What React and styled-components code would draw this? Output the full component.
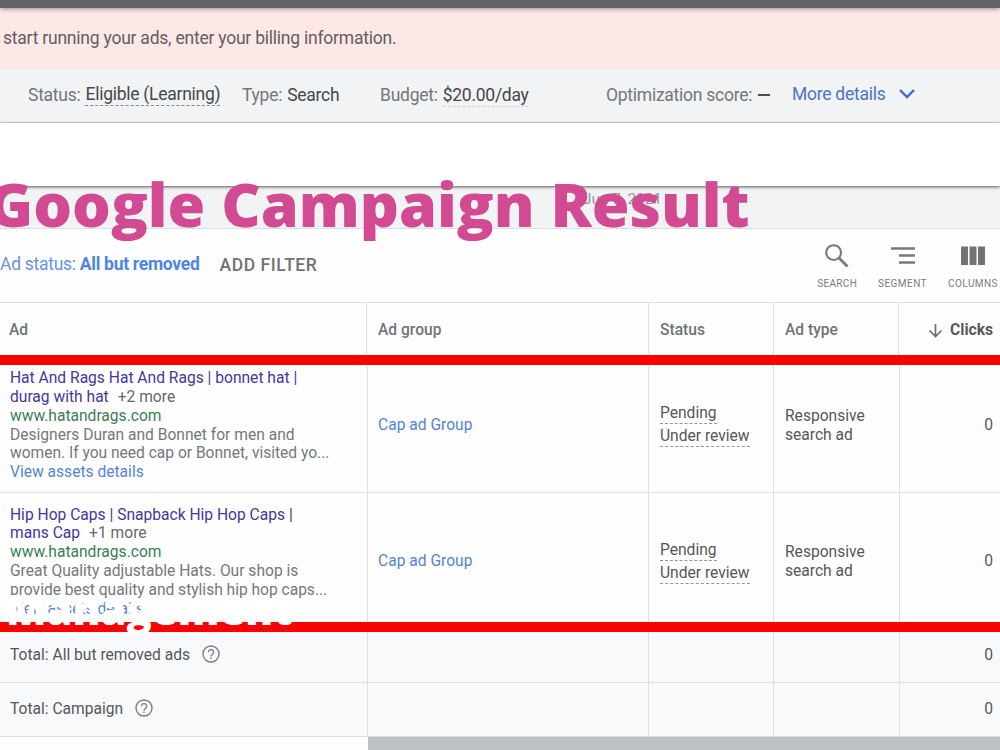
import React from "react";
import styled, { createGlobalStyle } from "styled-components";

const GlobalStyle = createGlobalStyle`
  * { box-sizing: border-box; }
  body {
    margin: 0;
    overflow: hidden;
    font-family: Roboto, "Liberation Sans", sans-serif;
    background: #fefefe;
  }
`;

const Page = styled.div`
  position: relative;
  width: 1000px;
  height: 750px;
  overflow: hidden;
  display: flex;
  flex-direction: column;
`;

const TopBar = styled.div`
  height: 8px;
  flex: none;
  background: #5f6368;
  box-shadow: 0 1px 5px rgba(60, 50, 50, 0.5);
  z-index: 1;
`;

const Banner = styled.div`
  height: 62px;
  flex: none;
  padding: 0 3px 3px;
  display: flex;
  align-items: center;
  background: #fce8e6;
  color: #655d60;
  font-size: 17.5px;
  letter-spacing: -0.23px;
`;

const StatusBar = styled.div`
  height: 53px;
  flex: none;
  display: flex;
  align-items: center;
  padding: 0 0 2px 28px;
  background: #f1f3f4;
  border-bottom: 1px solid #dadce0;
  font-size: 17.5px;
  letter-spacing: -0.26px;
  line-height: 22px;
  white-space: nowrap;
`;

const StatusItem = styled.div`
  display: flex;
  gap: 5px;
  width: ${(p) => p.$width}px;
  color: #74777b;
`;

const StatusValue = styled.span`
  height: 23px;
  color: #45484c;
  margin-top: ${(p) => (p.$raised ? "-1px" : "0")};
  border-bottom: ${(p) => (p.$line ? `1px dashed ${p.$line}` : "none")};
`;

const MoreDetails = styled.div`
  display: flex;
  align-items: center;
  gap: 14px;
  color: #4f74c6;
  padding-bottom: 3px;
`;

const Blank = styled.div`
  height: 63px;
  flex: none;
  background: #fff;
  box-shadow: 0 1px 3px rgba(0, 0, 0, 0.65);
  z-index: 1;
`;

const DateStrip = styled.div`
  height: 43px;
  flex: none;
  padding: 4px 0 0 583px;
  background: #f1f3f4;
  border-bottom: 1px solid #dcdfe1;
  color: #94979b;
  font-size: 15.3px;
`;

const Toolbar = styled.div`
  height: 74px;
  flex: none;
  display: flex;
  align-items: center;
  justify-content: space-between;
  padding-right: 2px;
  border-bottom: 1px solid #dfe1e3;
`;

const Filters = styled.div`
  display: flex;
  align-items: center;
  gap: 20px;
  padding-bottom: 4px;
  font-size: 17.5px;
  letter-spacing: -0.28px;
  color: #6991e0;

  b {
    color: #4f84e2;
  }
`;

const AddFilter = styled.span`
  position: relative;
  top: 1px;
  font-weight: 500;
  letter-spacing: 0.55px;
  color: #707275;
`;

const Tools = styled.div`
  display: flex;
  gap: 21px;
  padding-top: 2px;
`;

const Tool = styled.div`
  display: flex;
  flex-direction: column;
  align-items: center;
  gap: 10px;
  color: #7a7c7f;
  font-size: 10px;
  line-height: 12px;
  letter-spacing: ${(p) => p.$spacing}px;
`;

const Table = styled.div`
  flex: none;
`;

const Row = styled.div`
  display: grid;
  grid-template-columns: 368px 281px 125px 126px 100px;
  height: ${(p) => p.$height}px;
  background: ${(p) => (p.$total ? "#f8f9fa" : "#fefefe")};
  border-bottom: 1px solid #dddfe1;
  font-size: 15.6px;
  line-height: 18.8px;
  color: #54575b;
`;

const HeadRow = styled(Row)`
  grid-template-columns: 367px 282px 125px 125px 101px;
  font-weight: 500;
  color: #707377;
  border-bottom-color: transparent;
`;

const Cell = styled.div`
  display: flex;
  flex-direction: ${(p) => (p.$column ? "column" : "row")};
  align-items: ${(p) => (p.$column ? "flex-start" : "center")};
  justify-content: ${(p) => (p.$column ? "center" : p.$end ? "flex-end" : "flex-start")};
  gap: ${(p) => p.$gap || 0}px;
  padding: ${(p) => p.$drop || 0}px 7px 0 ${(p) => p.$indent || 10}px;
  border-right: 1px solid #dddfe1;
  white-space: nowrap;

  &:last-child {
    border-right: none;
  }
`;

const AdTitle = styled.span`
  color: #43389f;
`;

const More = styled.span`
  margin-left: 9px;
  color: #65686c;
`;

const AdUrl = styled.span`
  color: #3a8055;
`;

const AdText = styled.span`
  color: #75787b;
  letter-spacing: ${(p) => (p.$cut ? "-0.02px" : "0")};
`;

const Link = styled.span`
  color: #5584d6;
`;

const Dashed = styled.span`
  height: 20px;
  border-bottom: 1px dashed #94979b;
`;

const SortLabel = styled.b`
  color: #56595c;
`;

const Help = styled.svg`
  margin-bottom: 3px;
`;

const ScrollThumb = styled.div`
  height: 13px;
  flex: none;
  margin-left: 368px;
  background: #bdc1c6;
`;

const RedLine = styled.div`
  position: absolute;
  left: 0;
  right: 0;
  top: ${(p) => p.$top}px;
  height: 10px;
  background: #fa0303;
`;

const Caption = styled.div`
  position: absolute;
  left: ${(p) => p.$left}px;
  top: ${(p) => p.$top}px;
  font-family: "Open Sans", sans-serif;
  font-weight: 800;
  font-size: ${(p) => p.$size}px;
  line-height: 1;
  white-space: nowrap;
  color: ${(p) => p.$color};
  z-index: 2;
`;

const ads = [
  {
    title: ["Hat And Rags Hat And Rags | bonnet hat |", "durag with hat"],
    more: "+2 more",
    text: ["Designers Duran and Bonnet for men and", "women. If you need cap or Bonnet, visited yo..."],
    height: 137,
    drop: 3,
  },
  {
    title: ["Hip Hop Caps | Snapback Hip Hop Caps |", "mans Cap"],
    more: "+1 more",
    text: ["Great Quality adjustable Hats. Our shop is", "provide best quality and stylish hip hop caps..."],
    height: 136,
    drop: 2,
  },
];

const totals = ["Total: All but removed ads", "Total: Campaign"];

const HelpIcon = () => (
  <Help width="18" height="18" viewBox="0 0 18 18" fill="none" stroke="#7b7e82" strokeWidth="1.4">
    <circle cx="9" cy="9" r="8" />
    <path d="M6.400 7.200a2.600 2.600 0 1 1 4.200 2c-1 .7-1.600 1.100-1.600 2.200" />
    <path d="M9 12.600v1.500" />
  </Help>
);

export default function App() {
  return (
    <Page>
      <GlobalStyle />
      <TopBar />
      <Banner>start running your ads, enter your billing information.</Banner>
      <StatusBar>
        <StatusItem $width={214}>
          Status: <StatusValue $raised $line="#85888b">Eligible (Learning)</StatusValue>
        </StatusItem>
        <StatusItem $width={138}>
          Type: <StatusValue>Search</StatusValue>
        </StatusItem>
        <StatusItem $width={226}>
          Budget: <StatusValue $line="#d3d3d8">$20.00/day</StatusValue>
        </StatusItem>
        <StatusItem $width={186}>
          Optimization score:
          <svg width="13" height="22">
            <path d="M1 11h12" stroke="#4a4d50" strokeWidth="2" />
          </svg>
        </StatusItem>
        <MoreDetails>
          More details
          <svg width="16" height="11" viewBox="0 0 16 11" fill="none">
            <path d="M1 2l7 7 7-7" stroke="#3c6ac8" strokeWidth="2.4" />
          </svg>
        </MoreDetails>
      </StatusBar>
      <Blank />
      <DateStrip>Jun 7, 2021</DateStrip>
      <Toolbar>
        <Filters>
          <span>
            Ad status: <b>All but removed</b>
          </span>
          <AddFilter>ADD FILTER</AddFilter>
        </Filters>
        <Tools>
          <Tool $spacing={0.3}>
            <svg width="24" height="24" fill="none" stroke="#77797c">
              <circle cx="8.6" cy="8.6" r="7.4" strokeWidth="2.1" />
              <path d="M14 14l8.5 8.5" strokeWidth="2.8" />
            </svg>
            SEARCH
          </Tool>
          <Tool $spacing={0.45}>
            <svg width="24" height="24" stroke="#77797c" strokeWidth="2.4">
              <path d="M0 4.500h24M8 11.500h16M8 18.500h16" />
            </svg>
            SEGMENT
          </Tool>
          <Tool $spacing={0.45}>
            <svg width="24" height="24" fill="#707376">
              <path d="M0 2.500h7v18.500H0zM8.500 2.500h7v18.500h-7zM17 2.500h7v18.500h-7z" />
            </svg>
            COLUMNS
          </Tool>
        </Tools>
      </Toolbar>

      <Table>
        <HeadRow $height={53}>
          <Cell $drop={2} $indent={9}>Ad</Cell>
          <Cell $drop={2} $indent={11}>Ad group</Cell>
          <Cell $drop={2} $indent={11}>Status</Cell>
          <Cell $drop={2} $indent={11}>Ad type</Cell>
          <Cell $drop={2} $end $gap={7}>
            <svg width="15" height="15" fill="none" stroke="#6b6e72" strokeWidth="1.7">
              <path d="M7.500 1v12.500M1.500 7.500l6 6 6-6" />
            </svg>
            <SortLabel>Clicks</SortLabel>
          </Cell>
        </HeadRow>
        {ads.map((ad) => (
          <Row key={ad.more} $height={ad.height}>
            <Cell $column $drop={3}>
              <AdTitle>{ad.title[0]}</AdTitle>
              <AdTitle>
                {ad.title[1]}
                <More>{ad.more}</More>
              </AdTitle>
              <AdUrl>www.hatandrags.com</AdUrl>
              <AdText>{ad.text[0]}</AdText>
              <AdText $cut>{ad.text[1]}</AdText>
              <Link>View assets details</Link>
            </Cell>
            <Cell $drop={ad.drop}>
              <Link>Cap ad Group</Link>
            </Cell>
            <Cell $column $gap={3} $drop={3} $indent={11}>
              <Dashed>Pending</Dashed>
              <Dashed>Under review</Dashed>
            </Cell>
            <Cell $column $drop={3} $indent={11}>
              <span>Responsive</span>
              <span>search ad</span>
            </Cell>
            <Cell $end $drop={ad.drop}>0</Cell>
          </Row>
        ))}
        {totals.map((label) => (
          <Row key={label} $height={54} $total>
            <Cell $gap={12}>
              {label}
              <HelpIcon />
            </Cell>
            <Cell />
            <Cell />
            <Cell />
            <Cell $end>0</Cell>
          </Row>
        ))}
      </Table>
      <ScrollThumb />

      <RedLine $top={355} />
      <RedLine $top={622} />
      <Caption $left={-12} $top={173} $size={61} $color="#d24a91">
        Google Campaign Result
      </Caption>
      <Caption $left={6} $top={588} $size={41.8} $color="#fff">
        Management
      </Caption>
    </Page>
  );
}
